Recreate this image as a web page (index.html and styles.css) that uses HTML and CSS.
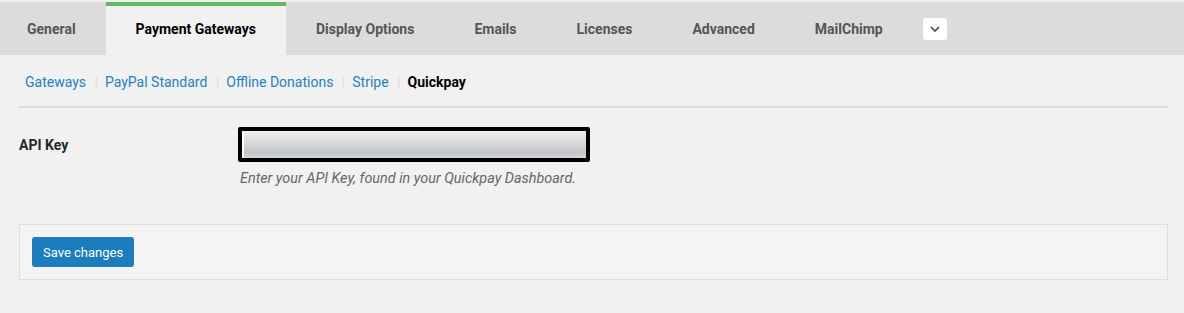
FILE: index.html
```html
<!DOCTYPE html>
<html lang="en">
<head>
  <meta charset="UTF-8">
  <title>Settings - Payment Gateways</title>
  <link rel="stylesheet" href="styles.css">
</head>
<body>
  <nav class="tabs">
    <a class="tab" href="#">General</a>
    <a class="tab active" href="#">Payment Gateways</a>
    <a class="tab" href="#">Display Options</a>
    <a class="tab" href="#">Emails</a>
    <a class="tab" href="#">Licenses</a>
    <a class="tab" href="#">Advanced</a>
    <a class="tab" href="#">MailChimp</a>
    <button class="more" type="button" aria-label="More">
      <svg width="10" height="6" viewBox="0 0 10 6"><path d="M1 1l4 4 4-4" fill="none" stroke="#444" stroke-width="1.6"/></svg>
    </button>
  </nav>

  <div class="wrap">
    <ul class="subnav">
      <li><a href="#">Gateways</a></li>
      <li><a href="#">PayPal Standard</a></li>
      <li><a href="#">Offline Donations</a></li>
      <li><a href="#">Stripe</a></li>
      <li><span class="current">Quickpay</span></li>
    </ul>

    <form class="settings">
      <div class="row">
        <label for="apiKey">API Key</label>
        <div class="field">
          <input type="text" id="apiKey" class="redacted">
          <p class="desc">Enter your API Key, found in your Quickpay Dashboard.</p>
        </div>
      </div>

      <div class="submit-box">
        <button type="submit" class="save">Save changes</button>
      </div>
    </form>
  </div>
</body>
</html>
```

FILE: styles.css
```css
body {
  margin: 0;
  padding-top: 2px;
  background: #f1f1f1;
  font-family: Roboto, "Liberation Sans", sans-serif;
  font-size: 14px;
  color: #23282d;
}
.tabs {
  display: flex;
  align-items: center;
  height: 53px;
  background: #dcdcdc;
}
.tab {
  display: flex;
  align-items: center;
  height: 100%;
  box-sizing: border-box;
  padding: 0 30px;
  font-weight: bold;
  color: #555;
  text-decoration: none;
}
.tab:first-child {
  padding-left: 27px;
}
.tab.active {
  background: #f1f1f1;
  color: #000;
  border-top: 4px solid #61b865;
  padding-bottom: 4px;
}
.more {
  margin-left: 10px;
  width: 24px;
  height: 22px;
  padding: 0;
  border: none;
  border-radius: 3px;
  background: #fff;
  display: flex;
  align-items: center;
  justify-content: center;
  cursor: pointer;
}
.wrap {
  padding: 0 16px 0 19px;
}
.subnav {
  list-style: none;
  margin: 0;
  padding: 19px 0 16px 6px;
  display: flex;
  border-bottom: 2px solid #dedede;
}
.subnav li + li::before {
  content: "|";
  color: #ddd;
  margin: 0 7px 0 8.5px;
}
.subnav a {
  color: #2382c5;
  text-decoration: none;
}
.subnav .current {
  font-weight: bold;
  color: #000;
}
.row {
  display: flex;
  padding-top: 19px;
}
.row label {
  width: 219px;
  font-weight: bold;
  padding-top: 10px;
}
.redacted {
  width: 352px;
  height: 35px;
  box-sizing: border-box;
  border: 4px solid #000;
  border-radius: 2px;
  box-shadow: inset 2px 0 0 #fff;
  background: linear-gradient(#f0f0f0, #d8d9da 45%, #c3c6c9 80%, #d3d5d7);
}
.desc {
  margin: 8px 0 0 2px;
  font-size: 14.4px;
  font-style: italic;
  color: #666;
}
.submit-box {
  margin-top: 37px;
  padding: 12px;
  background: #f4f4f4;
  border: 1px solid #dedede;
}
.save {
  display: block;
  height: 30px;
  padding: 0 11px;
  font-family: Roboto, "Liberation Sans", sans-serif;
  font-size: 13px;
  color: #fff;
  background: #1b7dbe;
  border: none;
  border-radius: 3px;
  cursor: pointer;
}
```
